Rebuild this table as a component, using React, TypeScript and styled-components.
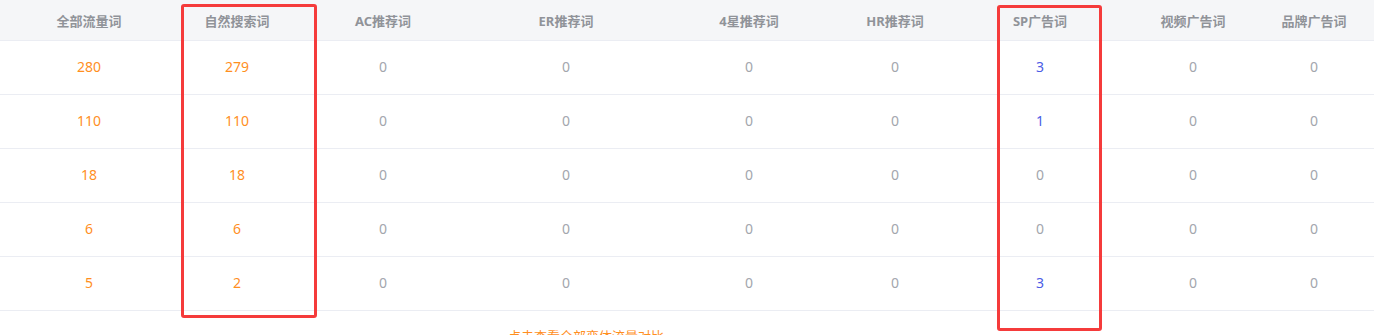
import styled, { createGlobalStyle } from 'styled-components';

const GlobalStyle = createGlobalStyle`
  html, body {
    margin: 0;
    padding: 0;
    background: #ffffff;
    font-family: "Noto Sans", "Noto Sans CJK SC", sans-serif;
    -webkit-font-smoothing: antialiased;
  }
`;

// column widths taken from the header text centres
const widths = [178, 118, 174, 192, 174, 118, 172, 134, 108];

const headers = ['全部流量词', '自然搜索词', 'AC推荐词', 'ER推荐词', '4星推荐词', 'HR推荐词', 'SP广告词', '视频广告词', '品牌广告词'];

const rows = [
  [280, 279, 0, 0, 0, 0, 3, 0, 0],
  [110, 110, 0, 0, 0, 0, 1, 0, 0],
  [18, 18, 0, 0, 0, 0, 0, 0, 0],
  [6, 6, 0, 0, 0, 0, 0, 0, 0],
  [5, 2, 0, 0, 0, 0, 3, 0, 0],
];

const colors = {
  headBg: '#f5f6f8',
  line: '#ebedf3',
  head: '#909399',
  grey: '#a3a6ad',
  orange: '#ff8f1f',
  blue: '#4b5be6',
  red: '#f53b3b',
};

const Page = styled.div`
  position: relative;
  width: 1382px;
  height: 335px;
  overflow: hidden;
`;

const Table = styled.div`
  width: 1374px;
  display: flex;
  flex-direction: column;
`;

const Row = styled.div<{ $head?: boolean }>`
  display: grid;
  grid-template-columns: ${widths.map((w) => `${w}px`).join(' ')};
  height: ${(p) => (p.$head ? 41 : 54)}px;
  background: ${(p) => (p.$head ? colors.headBg : '#ffffff')};
  border-bottom: 1px solid ${colors.line};
  box-sizing: border-box;
`;

const Cell = styled.div<{ $tone?: 'head' | 'grey' | 'orange' | 'blue' }>`
  display: flex;
  align-items: center;
  justify-content: center;
  padding-bottom: ${(p) => (p.$tone === 'head' ? 0 : 2)}px;
  font-size: ${(p) => (p.$tone === 'head' ? 13 : 14)}px;
  font-weight: ${(p) => (p.$tone === 'head' ? 700 : 400)};
  color: ${(p) => colors[p.$tone || 'grey']};
`;

const MoreLink = styled.div`
  padding: 15px 0 0 508px;
  font-size: 13px;
  color: ${colors.orange};
  white-space: nowrap;
`;

const Highlight = styled.div<{ $left: number; $top: number; $w: number; $h: number }>`
  position: absolute;
  left: ${(p) => p.$left}px;
  top: ${(p) => p.$top}px;
  width: ${(p) => p.$w}px;
  height: ${(p) => p.$h}px;
  border: 3px solid ${colors.red};
  border-radius: 3px;
  box-sizing: border-box;
  pointer-events: none;
`;

function toneFor(col: number, v: number): 'grey' | 'orange' | 'blue' {
  if (col <= 1) return 'orange';
  if (col === 6 && v > 0) return 'blue';
  return 'grey';
}

export default function App() {
  return (
    <>
      <GlobalStyle />
      <Page>
        <Table>
          <Row $head>
            {headers.map((h) => (
              <Cell key={h} $tone="head">{h}</Cell>
            ))}
          </Row>
          {rows.map((r, i) => (
            <Row key={i}>
              {r.map((v, j) => (
                <Cell key={j} $tone={toneFor(j, v)}>{v}</Cell>
              ))}
            </Row>
          ))}
        </Table>
        <MoreLink>点击查看全部变体流量对比</MoreLink>
        <Highlight $left={181} $top={4} $w={136} $h={314} />
        <Highlight $left={997} $top={5} $w={105} $h={326} />
      </Page>
    </>
  );
}
